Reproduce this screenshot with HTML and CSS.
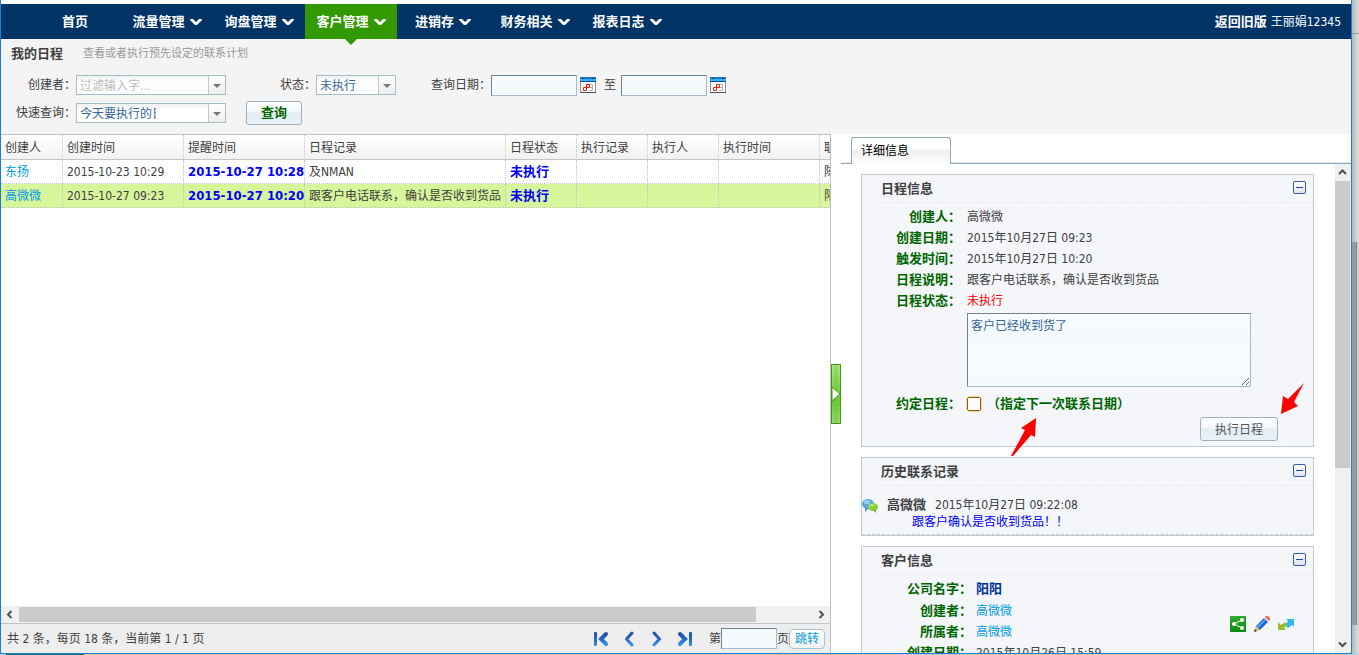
FILE: index.html
```html
<!DOCTYPE html>
<html lang="zh-CN">
<head>
<meta charset="utf-8">
<title>我的日程</title>
<link rel="stylesheet" href="styles.css">
</head>
<body>
<svg class="defs" aria-hidden="true">
  <defs>
    <linearGradient id="blue" x1="0" y1="0" x2="0" y2="1"><stop offset="0" stop-color="#2350a8"/><stop offset=".5" stop-color="#2468c4"/><stop offset="1" stop-color="#3b8fe0"/></linearGradient>
    <linearGradient id="greenbox" x1="0" y1="0" x2="0" y2="1"><stop offset="0" stop-color="#2fab2c"/><stop offset="1" stop-color="#078a0c"/></linearGradient>
    <symbol id="chevron" viewBox="0 0 12 8"><path d="M0 1h3l3 3 3-3h3v1L7 7H5L0 2z" fill="#fff"/></symbol>
    <symbol id="calendar" viewBox="0 0 16 16">
      <rect width="16" height="16" rx="1" fill="#8a93a0"/><rect x="1" y="5" width="14" height="10" fill="#fff"/>
      <rect y="0" width="16" height="5" fill="#1277d8"/><rect y="2" width="16" height="2" fill="#35b4ff"/><rect y="4" width="16" height="1" fill="#0b4c9c"/>
      <path d="M2 1.500h2M12 1.500h2" stroke="#103a66"/><path d="M0 15.500h16" stroke="#4b5560"/>
      <path d="M6.500 7.500h6v6h-3M9.500 10.500h3" fill="none" stroke="#aab4cc"/>
      <path d="M3.500 10.500h3v3h-3zM6.500 7.500h3v3h-3z" fill="#fff" stroke="#f01800"/>
    </symbol>
    <symbol id="prev" viewBox="0 0 10 16"><path d="M8 2 2.500 8 8 14" fill="none" stroke="url(#blue)" stroke-width="3" stroke-linecap="round" stroke-linejoin="round"/></symbol>
  </defs>
</svg>
<div class="desktop">
<div class="window">
  <header class="nav">
    <nav class="menu">
      <a class="menu-item" href="#">首页</a>
      <a class="menu-item" href="#">流量管理<svg><use href="#chevron"/></svg></a>
      <a class="menu-item" href="#">询盘管理<svg><use href="#chevron"/></svg></a>
      <a class="menu-item active" href="#">客户管理<svg><use href="#chevron"/></svg></a>
      <a class="menu-item" href="#">进销存<svg><use href="#chevron"/></svg></a>
      <a class="menu-item" href="#">财务相关<svg><use href="#chevron"/></svg></a>
      <a class="menu-item" href="#">报表日志<svg><use href="#chevron"/></svg></a>
    </nav>
    <div class="user"><a href="#">返回旧版</a><span>王丽娟12345</span></div>
  </header>

  <form class="filters">
    <div class="page-title"><h1>我的日程</h1><p>查看或者执行预先设定的联系计划</p></div>
    <div class="filter-row">
      <label class="first-label" for="creator">创建者：</label>
      <span class="combo wide"><input id="creator" type="text" placeholder="过滤输入字..."></span>
      <label class="status-label" for="status">状态：</label>
      <span class="combo"><select id="status"><option>未执行</option></select></span>
      <label class="date-label" for="from">查询日期：</label>
      <input class="date" id="from" type="text">
      <button class="icon-button" type="button" aria-label="选择开始日期"><svg width="16" height="16"><use href="#calendar"/></svg></button>
      <label class="to-label" for="to">至</label>
      <input class="date" id="to" type="text">
      <button class="icon-button" type="button" aria-label="选择结束日期"><svg width="16" height="16"><use href="#calendar"/></svg></button>
    </div>
    <div class="filter-row">
      <label class="first-label" for="quick">快速查询：</label>
      <span class="combo wide"><select class="clipped" id="quick"><option>今天要执行的日程</option></select></span>
      <button class="button search" type="button">查询</button>
    </div>
  </form>

  <main class="content">
    <section class="list">
      <div class="table-wrap">
        <table>
          <colgroup><col class="c-person"><col class="c-time"><col class="c-time"><col class="c-record"><col class="c-state"><col class="c-state"><col class="c-state"><col class="c-exec"><col class="c-state"></colgroup>
          <thead><tr><th>创建人</th><th>创建时间</th><th>提醒时间</th><th>日程记录</th><th>日程状态</th><th>执行记录</th><th>执行人</th><th>执行时间</th><th>联系人</th></tr></thead>
          <tbody>
            <tr><td><a href="#">东扬</a></td><td>2015-10-23 10:29</td><td class="strong">2015-10-27 10:28</td><td>及NMAN</td><td class="strong">未执行</td><td></td><td></td><td></td><td>陈</td></tr>
            <tr class="selected"><td><a href="#">高微微</a></td><td>2015-10-27 09:23</td><td class="strong">2015-10-27 10:20</td><td>跟客户电话联系，确认是否收到货品</td><td class="strong">未执行</td><td></td><td></td><td></td><td>阳阳</td></tr>
          </tbody>
        </table>
      </div>
      <div class="hscroll">
        <svg width="18" height="15"><path d="M10.500 4 7 7.500l3.500 3.500" fill="none" stroke="#505050" stroke-width="2"/></svg>
        <div class="htrack"><div class="hthumb"></div></div>
        <svg width="18" height="15"><path d="M7.500 4 11 7.500 7.500 11" fill="none" stroke="#505050" stroke-width="2"/></svg>
      </div>
      <footer class="pager">
        <span class="summary">共 2 条，每页 18 条，当前第 1 / 1 页</span>
        <div class="pager-nav">
          <button class="page-button" type="button" aria-label="首页"><svg width="16" height="16"><rect x="1" y="1" width="3" height="14" rx="1" fill="url(#blue)"/><path d="M13 3 8 8l5 5" fill="none" stroke="url(#blue)" stroke-width="4" stroke-linecap="round"/></svg></button>
          <button class="page-button" type="button" aria-label="上一页"><svg width="10" height="16"><use href="#prev"/></svg></button>
          <button class="page-button" type="button" aria-label="下一页"><svg class="flip" width="10" height="16"><use href="#prev"/></svg></button>
          <button class="page-button" type="button" aria-label="末页"><svg width="16" height="16"><rect x="12" y="1" width="3" height="14" rx="1" fill="url(#blue)"/><path d="m3 3 5 5-5 5" fill="none" stroke="url(#blue)" stroke-width="4" stroke-linecap="round"/></svg></button>
        </div>
        <label for="page">第</label><input class="page-input" id="page" type="text"><span>页</span><button class="jump" type="button">跳转</button>
      </footer>
    </section>

    <button class="splitter" type="button" aria-label="收起详细信息"><svg width="8" height="14"><path d="M0 0v14l8-7z" fill="#fff" stroke="#3e9a10" stroke-width="1"/></svg></button>

    <section class="detail">
      <div class="tabs"><button class="tab" type="button">详细信息</button></div>
      <div class="detail-body">
        <div class="panels">
          <section class="panel">
            <div class="panel-head"><h2>日程信息</h2><button class="toggle" type="button" aria-label="折叠日程信息"></button></div>
            <dl class="fields">
              <dt>创建人：</dt><dd>高微微</dd>
              <dt>创建日期：</dt><dd>2015年10月27日 09:23</dd>
              <dt>触发时间：</dt><dd>2015年10月27日 10:20</dd>
              <dt>日程说明：</dt><dd>跟客户电话联系，确认是否收到货品</dd>
              <dt>日程状态：</dt><dd class="red">未执行</dd>
            </dl>
            <textarea class="note" aria-label="执行说明">客户已经收到货了</textarea>
            <div class="plan"><label for="plan">约定日程：</label><input id="plan" type="checkbox"><label for="plan">（指定下一次联系日期）</label></div>
            <div class="actions"><button class="button run" type="button">执行日程</button></div>
            <svg class="arrow arrow-date" width="28" height="40" viewBox="0 0 28 40"><path d="M26 1 11 11l4 2L1 39l2 0 18-21 4 2z" fill="red"/></svg>
            <svg class="arrow arrow-run" width="25" height="33" viewBox="0 0 25 33"><path d="M1 32 3 14l5 3L24 1 14 20l4 4z" fill="red"/></svg>
          </section>

          <section class="panel history">
            <div class="panel-head"><h2>历史联系记录</h2><button class="toggle" type="button" aria-label="折叠历史联系记录"></button></div>
            <article class="entry">
              <svg width="16" height="16"><ellipse cx="6" cy="6" rx="6" ry="5" fill="#5aa8e4"/><path d="m3 9 0 5 4-4z" fill="#4e98d6"/><ellipse cx="5" cy="4" rx="3" ry="2" fill="#9bcdf3"/><ellipse cx="11" cy="9" rx="5" ry="4" fill="#8bd13a"/><path d="m11 12 3 3v-4z" fill="#6fb52b"/><ellipse cx="10" cy="7" rx="3" ry="1" fill="#b9e87a"/></svg>
              <div><p class="entry-head"><b>高微微</b><time>2015年10月27日 09:22:08</time></p><p class="entry-text">跟客户确认是否收到货品！！</p></div>
            </article>
          </section>

          <section class="panel">
            <div class="panel-head"><h2>客户信息</h2><button class="toggle" type="button" aria-label="折叠客户信息"></button></div>
            <div class="customer">
              <dl class="fields customer-fields">
                <dt>公司名字：</dt><dd class="company">阳阳</dd>
                <dt>创建者：</dt><dd><a href="#">高微微</a></dd>
                <dt>所属者：</dt><dd><a href="#">高微微</a></dd>
                <dt>创建日期：</dt><dd>2015年10月26日 15:59</dd>
              </dl>
              <div class="tools">
                <button class="icon-button" type="button" aria-label="分享"><svg width="16" height="16"><rect width="16" height="16" rx="1" fill="url(#greenbox)"/><path d="M12 4 4 8l8 4" fill="none" stroke="#fff" stroke-width="1"/><circle cx="12" cy="4" r="2" fill="#fff"/><circle cx="4" cy="8" r="2" fill="#fff"/><circle cx="12" cy="12" r="2" fill="#fff"/></svg></button>
                <button class="icon-button" type="button" aria-label="编辑"><svg width="16" height="16"><path d="m0 16 2-6 4 4z" fill="#f0c36a"/><path d="m0 16 1-3 2 2z" fill="#333"/><path d="M2 10 10 2l4 4-8 8z" fill="#1769cf"/><path d="m3 10 8-7 1 1-8 8z" fill="#58a9f5"/><path d="m10 2 1-1 4 4-1 1z" fill="#d7dde6"/><path d="m11 1 1-1h2l2 2v2l-1 1z" fill="#ed6a55"/></svg></button>
                <button class="icon-button" type="button" aria-label="转移"><svg width="16" height="16"><path d="M8 3h8v8l-2-2-4 3-3-3 3-4z" fill="#34b8e8"/><path d="M0 6v8h8l-2-2 3-3-2-3-4 3z" fill="#96be2e"/></svg></button>
              </div>
            </div>
          </section>
        </div>
        <div class="vscroll">
          <svg width="15" height="17"><path d="m4 10 3.500-3.500L11 10" fill="none" stroke="#505050" stroke-width="2"/></svg>
          <div class="vtrack"><div class="vthumb"></div></div>
          <svg width="15" height="17"><path d="M4 6.500 7.500 10 11 6.500" fill="none" stroke="#505050" stroke-width="2"/></svg>
        </div>
      </div>
    </section>
  </main>
</div>
<aside class="behind"><div class="behind-top"></div><div class="behind-track"></div><div class="behind-thumb"></div><div class="behind-end"></div></aside>
</div>
<div class="taskline"><span></span></div>
</body>
</html>
```

FILE: styles.css
```css
* { box-sizing: border-box; }
body, h1, h2, p, dl, dd { margin: 0; }
body {
  height: 100vh;
  overflow: hidden;
  display: flex;
  flex-direction: column;
  background: #fff;
  color: #404040;
  font: 12px/16px "DejaVu Sans Condensed", "Noto Sans CJK SC", sans-serif;
}
.defs { position: absolute; width: 0; height: 0; }
button, input, select, textarea { font: inherit; color: inherit; margin: 0; }
button { padding: 0; cursor: pointer; }
a { color: #0099e8; text-decoration: none; }
svg { display: block; }

.desktop { flex: 1; min-height: 0; display: flex; }
.window {
  flex: 1;
  min-width: 0;
  display: flex;
  flex-direction: column;
  padding-top: 4px;
  border: solid #1c7fd0;
  border-width: 0 1px 1px;
  background: #fff;
}
.behind { width: 7px; display: flex; flex-direction: column; background: #d2d2d2; }
.behind-top { height: 34px; border-bottom: 1px solid #999; background: linear-gradient(90deg, #b8b8b8, #dcdcdc); }
.behind-track { height: 208px; background: linear-gradient(90deg, #b8b8b8, #e0e0e0); }
.behind-thumb { flex: 1; margin-right: 2px; background: #999; border-right: 1px solid #888; }
.behind-end { height: 29px; background: linear-gradient(90deg, #b8b8b8, #e0e0e0); }
.taskline { height: 1px; background: #c8c8c8; padding-left: 6px; }
.taskline span { display: block; width: 78px; height: 1px; background: #087078; }

/* Navigation */
.nav { height: 35px; flex: none; display: flex; justify-content: space-between; background: #003366; padding: 0 10px 0 28px; }
.menu { display: flex; }
.menu-item {
  min-width: 92px;
  display: flex;
  align-items: center;
  justify-content: center;
  gap: 5px;
  color: #fff;
  font-size: 13px;
  font-weight: bold;
  position: relative;
}
.menu-item svg { width: 12px; height: 8px; }
.active { background: #339900; }
.active::after {
  content: "";
  position: absolute;
  top: 100%;
  left: 50%;
  margin-left: -6px;
  border: 6px solid transparent;
  border-top-color: #339900;
  border-bottom: 0;
}
.user { display: flex; align-items: center; gap: 4px; color: #fff; }
.user a { color: #fff; font-size: 13px; font-weight: bold; }

/* Filters */
.filters { flex: none; background: #f4f4f4; padding-bottom: 7px; }
.page-title { display: flex; align-items: center; gap: 20px; height: 32px; padding: 0 0 3px 10px; }
h1, h2 { font-size: 13px; line-height: 18px; }
.page-title p { font-size: 11px; color: #999; }
.filter-row { height: 28px; display: flex; align-items: center; padding-left: 4px; }
.first-label { width: 71px; text-align: right; }
.status-label { width: 90px; text-align: right; }
.date-label { width: 95px; text-align: right; }
.to-label { margin: 0 5px 0 8px; }
.combo { position: relative; width: 80px; height: 20px; }
.wide { width: 150px; }
.combo input, .combo select {
  display: block;
  appearance: none;
  width: 100%;
  height: 20px;
  padding: 1px 18px 0 3px;
  border: 1px solid #a6bcc8;
  border-radius: 0;
  background: linear-gradient(#f0f0f0, #fff 6px);
  color: #336699;
}
.combo .clipped { padding-right: 69px; }
.combo ::placeholder { color: #bbb; }
.combo::before {
  content: "";
  position: absolute;
  top: 1px;
  right: 1px;
  width: 16px;
  height: 18px;
  border-left: 1px solid #c5c5c5;
  background: linear-gradient(#fff, #eee);
  pointer-events: none;
}
.combo::after {
  content: "";
  position: absolute;
  top: 9px;
  right: 5px;
  border: 4px solid transparent;
  border-top-color: #777;
  border-bottom: 0;
  pointer-events: none;
}
.date, .page-input, .note {
  border: 1px solid;
  border-color: #6d8293 #a8bccd #a8bccd #6d8293;
  border-radius: 0;
  background: #f5fafd;
  color: #336699;
}
.date { width: 86px; height: 21px; margin-right: 3px; }
.icon-button { border: 0; background: none; width: 16px; height: 16px; flex: none; }
.button {
  height: 24px;
  border: 1px solid #9fb0be;
  border-radius: 3px;
  background: linear-gradient(#fff, #f4f8fb 45%, #e2edf5 50%, #e9f1f8);
}
.search { width: 56px; margin-left: 20px; color: #006600; font-size: 13px; font-weight: bold; }

/* Schedule list */
.content { flex: 1; min-height: 0; display: flex; }
.list { width: 830px; min-width: 0; flex: 0 1 830px; display: flex; flex-direction: column; border: solid #c0c0c0; border-width: 1px 1px 0 0; }
.table-wrap { flex: 1; min-height: 0; overflow: hidden; }
table { width: 889px; table-layout: fixed; border-collapse: separate; border-spacing: 0; }
.c-person { width: 62px; }
.c-time { width: 121px; }
.c-record { width: 201px; }
.c-state { width: 71px; }
.c-exec { width: 101px; }
th, td {
  height: 24px;
  padding: 1px 0 0 4px;
  text-align: left;
  font-weight: normal;
  white-space: nowrap;
  border-right: 1px dotted #c4c4c4;
  border-bottom: 1px dotted #c4c4c4;
}
th { height: 25px; padding-top: 2px; border-bottom: 1px solid #c4c4c4; background: linear-gradient(#fff, #f2f2f2); }
.selected td { background: #d7f59b; }
.strong { color: #0000ff; font-size: 13px; font-weight: bold; }
.hscroll { flex: none; display: flex; height: 17px; background: #f0f0f0; }
.hscroll svg { margin-top: 1px; }
.htrack { flex: 1; padding-top: 1px; }
.hthumb { width: 93%; height: 15px; background: #cbcbcb; }
.pager { flex: none; height: 30px; display: flex; align-items: center; padding: 0 5px 0 6px; border-top: 1px solid #c4c4c4; background: #eee; }
.pager-nav { margin-left: auto; margin-right: 10px; display: flex; }
.page-button { width: 28px; height: 20px; border: 0; background: none; display: flex; align-items: center; justify-content: center; }
.flip { transform: scaleX(-1); }
.page-input { width: 56px; height: 21px; }
.jump { width: 36px; height: 20px; color: #0099dd; border: 1px solid #a8c4d4; border-radius: 4px; background: linear-gradient(#fff, #f0f0f0); }
.splitter {
  flex: none;
  align-self: center;
  width: 10px;
  height: 60px;
  border: 1px solid #3e9a10;
  background: linear-gradient(90deg, transparent, #64c82c88 50%, transparent), linear-gradient(#b8e69a, #66c832 60%, #a4dc84);
  display: flex;
  align-items: center;
}

/* Details */
.detail { flex: 1; min-width: 0; display: flex; flex-direction: column; }
.tabs { flex: none; height: 30px; padding: 3px 0 0 10px; border-bottom: 1px solid #91a7b8; box-shadow: inset 0 -1px #deedf8; }
.tab {
  display: block;
  width: 100px;
  height: 27px;
  padding-left: 9px;
  text-align: left;
  color: #000;
  border: 1px solid #91a7b8;
  border-bottom: 0;
  border-radius: 3px 3px 0 0;
  background: linear-gradient(#fff 40%, #efefef 50%, #fff);
}
.detail-body { flex: 1; min-height: 0; display: flex; }
.panels { flex: 1; min-width: 0; overflow: hidden; padding: 10px 21px 0 20px; }
.panel { position: relative; margin-bottom: 10px; border: 1px solid #c2cbd3; background: #f4f6fa; }
.panel-head { height: 28px; margin-left: 19px; padding-right: 7px; display: flex; align-items: center; justify-content: space-between; border-bottom: 1px dashed #e6e8ec; }
.toggle {
  width: 13px;
  height: 13px;
  margin-bottom: 3px;
  border: 1px solid #3558c0;
  border-radius: 2px;
  background: linear-gradient(#2448a0, #2448a0) center / 7px 1px no-repeat, linear-gradient(#fff, #e2e4f0);
}
.fields { display: grid; grid-template-columns: 99px 1fr; column-gap: 6px; grid-auto-rows: 21px; align-items: center; padding-top: 3px; }
dt, .plan label { color: #006600; font-size: 13px; font-weight: bold; text-align: right; }
.red { color: #ff0000; }
.note {
  display: block;
  width: 284px;
  height: 74px;
  margin: 2px 0 0 105px;
  padding: 4px 3px;
  resize: both;
  background: linear-gradient(#f9fcfe, #f2f8fc 35%, #f9fcfe 55%, #f3f9fc);
}
.plan { height: 30px; padding-top: 4px; display: flex; align-items: center; }
.plan label:first-child { width: 99px; }
.plan input {
  appearance: none;
  width: 14px;
  height: 14px;
  margin: 0 6px;
  border: 1px solid #8c5a14;
  outline: 1px solid #f2d9a0;
  border-radius: 2px;
  background: #fff;
}
.actions { display: flex; justify-content: flex-end; padding: 0 35px 5px 0; }
.run { width: 78px; padding-top: 1px; color: #555; }
.arrow { position: absolute; pointer-events: none; z-index: 1; }
.arrow-date { left: 148px; top: 242px; }
.arrow-run { right: 8px; top: 207px; }
.entry { display: flex; align-items: flex-start; gap: 9px; padding: 10px 0 4px; border-bottom: 1px dashed #c2cbd3; }
.entry svg { margin-top: 2px; }
.entry-head { display: flex; gap: 9px; line-height: 18px; }
.entry-head b { font-size: 13px; }
.entry-text { padding-left: 25px; color: #0000ff; }
.customer { position: relative; }
.customer-fields { grid-template-columns: 110px 1fr; column-gap: 4px; grid-template-rows: 22px; }
.company { color: #003399; font-size: 13px; font-weight: bold; }
.tools { position: absolute; right: 19px; top: 41px; display: flex; gap: 8px; }
.vscroll { flex: none; width: 16px; display: flex; flex-direction: column; background: #f0f0f0; }
.vtrack { flex: 1; }
.vthumb { width: 15px; height: 63%; background: #cbcbcb; }
```
